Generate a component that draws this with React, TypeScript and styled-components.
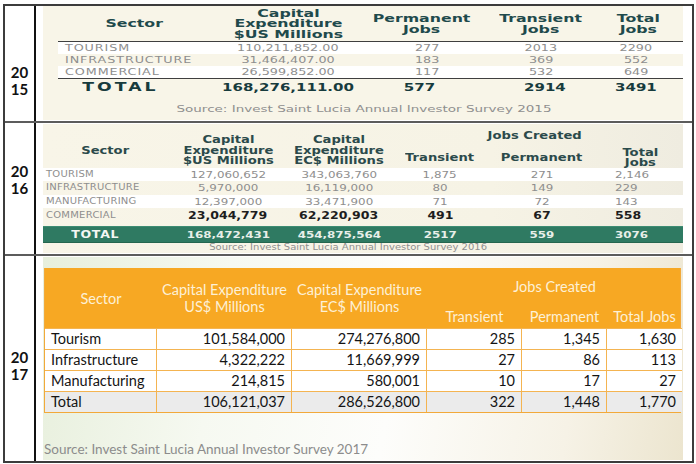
import React from 'react';
import styled, { createGlobalStyle } from 'styled-components';

const GlobalStyle = createGlobalStyle`
  html, body {
    margin: 0;
    padding: 0;
    background: #ffffff;
  }
  body {
    font-family: 'DejaVu Sans', 'Liberation Sans', sans-serif;
  }
`;

const COLS15 = '152px 156px 112px 126px 68px';
const COLS16 = '125px 120px 102px 100px 104px 86px';
const COLS17 = '112px 135px 135px 95px 85px 75px';

const Frame = styled.div`
  margin: 4px 0 0 3px;
  width: 691px;
  height: 459px;
  box-sizing: border-box;
  border: 2px solid #3c3c3c;
  display: flex;
  flex-direction: column;
`;

const Section = styled.div<{ $h?: number; $last?: boolean }>`
  display: grid;
  grid-template-columns: 31px 1fr;
  box-sizing: border-box;
  ${(p) => (p.$h ? `height: ${p.$h}px;` : 'flex: 1;')}
  border-bottom: ${(p) => (p.$last ? 'none' : '2px solid #5c5c5c')};
`;

const YearCell = styled.div<{ $top: number }>`
  border-right: 2px solid #111;
  padding-top: ${(p) => p.$top}px;
  text-align: center;
  font-family: Lato, 'Open Sans', sans-serif;
  font-weight: 700;
  font-size: 15px;
  line-height: 17px;
  color: #111;
`;

const Content = styled.div<{ $pt?: number }>`
  padding: ${(p) => p.$pt ?? 0}px 9px 0 7px;
`;

/* stretched look of the pasted report images */
const Stretch = styled.span<{ $sx: number; $origin?: string }>`
  display: inline-block;
  white-space: nowrap;
  transform: scaleX(${(p) => p.$sx});
  transform-origin: ${(p) => p.$origin ?? 'center'};
`;

const HeadText = styled(Stretch)<{ $color?: string }>`
  font-weight: 700;
  font-size: 10.5px;
  line-height: 10.5px;
  text-align: center;
  color: ${(p) => p.$color ?? '#1f4a4c'};
`;

const NameText = styled(Stretch)<{ $size: number; $ls?: number }>`
  font-size: ${(p) => p.$size}px;
  line-height: 1;
  letter-spacing: ${(p) => p.$ls ?? 0}px;
  color: #8e8e8e;
`;

const NumText = styled(Stretch)<{ $size: number; $strong?: boolean; $color?: string }>`
  font-size: ${(p) => p.$size}px;
  line-height: 1;
  font-weight: ${(p) => (p.$strong ? 700 : 400)};
  color: ${(p) => p.$color ?? (p.$strong ? '#1c2b2b' : '#8e8e8e')};
`;

const TotalWord = styled(Stretch)<{ $size: number; $ls: number; $color: string }>`
  font-size: ${(p) => p.$size}px;
  line-height: 1;
  font-weight: 700;
  letter-spacing: ${(p) => p.$ls}px;
  color: ${(p) => p.$color};
`;

const SourceText = styled(Stretch)<{ $size: number }>`
  font-size: ${(p) => p.$size}px;
  line-height: 1;
  color: #8f8f8f;
`;

const Row = styled.div<{ $cols: string; $h: number; $bg?: string; $line?: 'top' | 'bottom' }>`
  display: grid;
  grid-template-columns: ${(p) => p.$cols};
  height: ${(p) => p.$h}px;
  background: ${(p) => p.$bg ?? 'transparent'};
  box-sizing: border-box;
  ${(p) => (p.$line ? `border-${p.$line}: 1px solid #3f3f3f;` : '')}
`;

const Cell = styled.div<{ $align?: 'left' | 'center'; $pl?: number; $pr?: number; $pt?: number }>`
  display: flex;
  align-items: center;
  justify-content: ${(p) => (p.$align === 'left' ? 'flex-start' : 'center')};
  padding: ${(p) => p.$pt ?? 0}px ${(p) => p.$pr ?? 0}px 0 ${(p) => p.$pl ?? 0}px;
  white-space: nowrap;
`;

/* ---------- 2015 ---------- */

const Panel15 = styled.div`
  height: 114px;
  background: #f8f5e8;
  padding-left: 15px;
  box-sizing: border-box;
`;

const Source15 = styled.div`
  display: flex;
  justify-content: center;
  padding: 9px 12px 0 0;
`;

const rows15 = [
  ['TOURISM', '110,211,852.00', '277', '2013', '2290'],
  ['INFRASTRUCTURE', '31,464,407.00', '183', '369', '552'],
  ['COMMERCIAL', '26,599,852.00', '117', '532', '649'],
];

const Year2015 = () => (
  <Panel15>
    <Row $cols={COLS15} $h={36} $line="bottom">
      <Cell>
        <HeadText $sx={1.5}>Sector</HeadText>
      </Cell>
      <Cell>
        <HeadText $sx={1.5}>
          Capital
          <br />
          Expenditure
          <br />
          $US Millions
        </HeadText>
      </Cell>
      <Cell>
        <HeadText $sx={1.5}>
          Permanent
          <br />
          Jobs
        </HeadText>
      </Cell>
      <Cell>
        <HeadText $sx={1.5}>
          Transient
          <br />
          Jobs
        </HeadText>
      </Cell>
      <Cell>
        <HeadText $sx={1.5}>
          Total
          <br />
          Jobs
        </HeadText>
      </Cell>
    </Row>
    {rows15.map((r, i) => (
      <Row key={r[0]} $cols={COLS15} $h={12} $bg={i % 2 === 0 ? '#ffffff' : undefined}>
        <Cell $align="left" $pl={7}>
          <NameText $sx={1.5} $origin="left" $size={8.5} $ls={0.6}>
            {r[0]}
          </NameText>
        </Cell>
        <Cell>
          <NumText $sx={1.5} $size={8.5}>{r[1]}</NumText>
        </Cell>
        <Cell $pl={10}>
          <NumText $sx={1.5} $size={8.5}>{r[2]}</NumText>
        </Cell>
        <Cell>
          <NumText $sx={1.5} $size={8.5}>{r[3]}</NumText>
        </Cell>
        <Cell $pr={4}>
          <NumText $sx={1.5} $size={8.5}>{r[4]}</NumText>
        </Cell>
      </Row>
    ))}
    <Row $cols={COLS15} $h={18} $line="top">
      <Cell $pr={28}>
        <TotalWord $sx={1.5} $size={11.5} $ls={2} $color="#173b3d">
          TOTAL
        </TotalWord>
      </Cell>
      <Cell>
        <NumText $sx={1.5} $size={10} $strong $color="#173b3d">
          168,276,111.00
        </NumText>
      </Cell>
      <Cell $pr={6}>
        <NumText $sx={1.5} $size={10} $strong $color="#173b3d">
          577
        </NumText>
      </Cell>
      <Cell $pl={8}>
        <NumText $sx={1.5} $size={10} $strong $color="#173b3d">
          2914
        </NumText>
      </Cell>
      <Cell $pr={4}>
        <NumText $sx={1.5} $size={10} $strong $color="#173b3d">
          3491
        </NumText>
      </Cell>
    </Row>
    <Source15>
      <SourceText $sx={1.5} $size={9}>
        Source: Invest Saint Lucia Annual Investor Survey 2015
      </SourceText>
    </Source15>
  </Panel15>
);

/* ---------- 2016 ---------- */

const Panel16 = styled.div`
  height: 129px;
  background: linear-gradient(to right, #f8f5e8 0%, #f6f3e5 70%, #efece0 100%);
  box-sizing: border-box;
`;

const Head16 = styled.div`
  display: grid;
  grid-template-columns: ${COLS16};
  grid-template-rows: 22px 22px;
`;

const HeadCell16 = styled(Cell)<{ $col: string; $row: string }>`
  grid-column: ${(p) => p.$col};
  grid-row: ${(p) => p.$row};
`;

const GreenRow = styled(Row)`
  margin-top: 3px;
  background: #2f7a62;
  border-top: 1px solid #3d8c73;
  border-bottom: 1px solid #25664f;
`;

const Source16 = styled.div`
  display: flex;
  justify-content: center;
  padding: 1px 30px 0 0;
`;

const rows16 = [
  ['TOURISM', '127,060,652', '343,063,760', '1,875', '271', '2,146'],
  ['INFRASTRUCTURE', '5,970,000', '16,119,000', '80', '149', '229'],
  ['MANUFACTURING', '12,397,000', '33,471,900', '71', '72', '143'],
];
const heights16 = [13, 14, 13];

const Year2016 = () => (
  <Panel16>
    <Head16>
      <HeadCell16 $col="1" $row="1 / 3" $pt={8}>
        <HeadText $sx={1.25} $color="#2b4a4b">Sector</HeadText>
      </HeadCell16>
      <HeadCell16 $col="2" $row="1 / 3" $pt={8}>
        <HeadText $sx={1.25} $color="#2b4a4b">
          Capital
          <br />
          Expenditure
          <br />
          $US Millions
        </HeadText>
      </HeadCell16>
      <HeadCell16 $col="3" $row="1 / 3" $pt={8}>
        <HeadText $sx={1.25} $color="#2b4a4b">
          Capital
          <br />
          Expenditure
          <br />
          EC$ Millions
        </HeadText>
      </HeadCell16>
      <HeadCell16 $col="4 / 7" $row="1">
        <HeadText $sx={1.25} $color="#2b4a4b">Jobs Created</HeadText>
      </HeadCell16>
      <HeadCell16 $col="4" $row="2">
        <HeadText $sx={1.25} $color="#2b4a4b">Transient</HeadText>
      </HeadCell16>
      <HeadCell16 $col="5" $row="2">
        <HeadText $sx={1.25} $color="#2b4a4b">Permanent</HeadText>
      </HeadCell16>
      <HeadCell16 $col="6" $row="2" $pl={6}>
        <HeadText $sx={1.25} $color="#2b4a4b">
          Total
          <br />
          Jobs
        </HeadText>
      </HeadCell16>
    </Head16>
    {rows16.map((r, i) => (
      <Row key={r[0]} $cols={COLS16} $h={heights16[i]} $bg={i % 2 === 0 ? '#ffffff' : undefined}>
        <Cell $align="left" $pl={3}>
          <NameText $sx={1.25} $origin="left" $size={8} $ls={0.2}>
            {r[0]}
          </NameText>
        </Cell>
        <Cell>
          <NumText $sx={1.25} $size={9.5}>{r[1]}</NumText>
        </Cell>
        <Cell>
          <NumText $sx={1.25} $size={9.5}>{r[2]}</NumText>
        </Cell>
        <Cell>
          <NumText $sx={1.25} $size={9.5}>{r[3]}</NumText>
        </Cell>
        <Cell>
          <NumText $sx={1.25} $size={9.5}>{r[4]}</NumText>
        </Cell>
        <Cell $align="left" $pl={21}>
          <NumText $sx={1.25} $origin="left" $size={9.5}>
            {r[5]}
          </NumText>
        </Cell>
      </Row>
    ))}
    <Row $cols={COLS16} $h={15}>
      <Cell $align="left" $pl={3}>
        <NameText $sx={1.25} $origin="left" $size={8} $ls={0.2}>
          COMMERCIAL
        </NameText>
      </Cell>
      <Cell>
        <NumText $sx={1.25} $size={10} $strong $color="#1d1d1d">
          23,044,779
        </NumText>
      </Cell>
      <Cell>
        <NumText $sx={1.25} $size={10} $strong $color="#1d1d1d">
          62,220,903
        </NumText>
      </Cell>
      <Cell>
        <NumText $sx={1.25} $size={10} $strong $color="#1d1d1d">
          491
        </NumText>
      </Cell>
      <Cell>
        <NumText $sx={1.25} $size={10} $strong $color="#1d1d1d">
          67
        </NumText>
      </Cell>
      <Cell $align="left" $pl={21}>
        <NumText $sx={1.25} $origin="left" $size={10} $strong $color="#1d1d1d">
          558
        </NumText>
      </Cell>
    </Row>
    <GreenRow $cols={COLS16} $h={17}>
      <Cell $pr={20}>
        <TotalWord $sx={1.25} $size={10} $ls={0.6} $color="#f4f7f3">
          TOTAL
        </TotalWord>
      </Cell>
      <Cell>
        <NumText $sx={1.25} $size={9.5} $strong $color="#e8efe9">
          168,472,431
        </NumText>
      </Cell>
      <Cell>
        <NumText $sx={1.25} $size={9.5} $strong $color="#e8efe9">
          454,875,564
        </NumText>
      </Cell>
      <Cell>
        <NumText $sx={1.25} $size={9.5} $strong $color="#e8efe9">
          2517
        </NumText>
      </Cell>
      <Cell>
        <NumText $sx={1.25} $size={9.5} $strong $color="#e8efe9">
          559
        </NumText>
      </Cell>
      <Cell $align="left" $pl={21}>
        <NumText $sx={1.25} $origin="left" $size={9.5} $strong $color="#e8efe9">
          3076
        </NumText>
      </Cell>
    </GreenRow>
    <Source16>
      <SourceText $sx={1.25} $size={8}>
        Source: Invest Saint Lucia Annual Investor Survey 2016
      </SourceText>
    </Source16>
  </Panel16>
);

/* ---------- 2017 ---------- */

const Panel17 = styled.div`
  height: 203px;
  box-sizing: border-box;
  padding: 11px 0 0 1px;
  display: flex;
  flex-direction: column;
  background: linear-gradient(
    100deg,
    #e7efdc 0%,
    #f6f9f1 28%,
    #fdfdfb 55%,
    #f6f2e6 82%,
    #ece5cf 100%
  );
`;

const Table17 = styled.div`
  display: grid;
  grid-template-columns: ${COLS17};
  grid-template-rows: 30px 30px repeat(4, 21px);
  width: 637px;
  font-family: Lato, 'Open Sans', sans-serif;
  border: 1px solid #f2a93a;
  border-top: none;
  box-sizing: border-box;
  background: #f7a823;
`;

const Head17 = styled.div<{ $col: string; $row: string; $pt?: number }>`
  grid-column: ${(p) => p.$col};
  grid-row: ${(p) => p.$row};
  align-self: center;
  text-align: center;
  padding-top: ${(p) => p.$pt ?? 0}px;
  color: #fdf0d6;
  font-size: 14.5px;
  line-height: 17px;
`;

const Body17 = styled.div<{ $total?: boolean; $first?: boolean; $last?: boolean }>`
  background: ${(p) => (p.$total ? '#ebebeb' : '#ffffff')};
  border-top: 1px solid #f4b451;
  border-right: ${(p) => (p.$last ? 'none' : '1px solid #f4b451')};
  text-align: ${(p) => (p.$first ? 'left' : 'right')};
  padding: 0 6px;
  font-size: 14.5px;
  line-height: 20px;
  color: #141414;
  white-space: nowrap;
`;

const Source17 = styled.div`
  margin-top: auto;
  padding: 0 0 2px 0;
  font-family: Lato, 'Open Sans', sans-serif;
  font-size: 13.5px;
  line-height: 18px;
  color: #8c8c8c;
`;

const rows17 = [
  ['Tourism', '101,584,000', '274,276,800', '285', '1,345', '1,630'],
  ['Infrastructure', '4,322,222', '11,669,999', '27', '86', '113'],
  ['Manufacturing', '214,815', '580,001', '10', '17', '27'],
  ['Total', '106,121,037', '286,526,800', '322', '1,448', '1,770'],
];

const Year2017 = () => (
  <Panel17>
    <Table17>
      <Head17 $col="1" $row="1 / 3">Sector</Head17>
      <Head17 $col="2" $row="1 / 3">
        Capital Expenditure
        <br />
        US$ Millions
      </Head17>
      <Head17 $col="3" $row="1 / 3">
        Capital Expenditure
        <br />
        EC$ Millions
      </Head17>
      <Head17 $col="4 / 7" $row="1" $pt={6}>
        Jobs Created
      </Head17>
      <Head17 $col="4" $row="2" $pt={7}>
        Transient
      </Head17>
      <Head17 $col="5" $row="2" $pt={7}>
        Permanent
      </Head17>
      <Head17 $col="6" $row="2" $pt={7}>
        Total Jobs
      </Head17>
      {rows17.map((r, i) =>
        r.map((v, j) => (
          <Body17 key={`${i}-${j}`} $total={i === 3} $first={j === 0} $last={j === 5}>
            {v}
          </Body17>
        )),
      )}
    </Table17>
    <Source17>Source: Invest Saint Lucia Annual Investor Survey 2017</Source17>
  </Panel17>
);

export default function App() {
  return (
    <>
      <GlobalStyle />
      <Frame>
        <Section $h={117}>
          <YearCell $top={58}>
            20
            <br />
            15
          </YearCell>
          <Content>
            <Year2015 />
          </Content>
        </Section>
        <Section $h={133}>
          <YearCell $top={40}>
            20
            <br />
            16
          </YearCell>
          <Content $pt={1}>
            <Year2016 />
          </Content>
        </Section>
        <Section $last>
          <YearCell $top={93}>
            20
            <br />
            17
          </YearCell>
          <Content $pt={1}>
            <Year2017 />
          </Content>
        </Section>
      </Frame>
    </>
  );
}
